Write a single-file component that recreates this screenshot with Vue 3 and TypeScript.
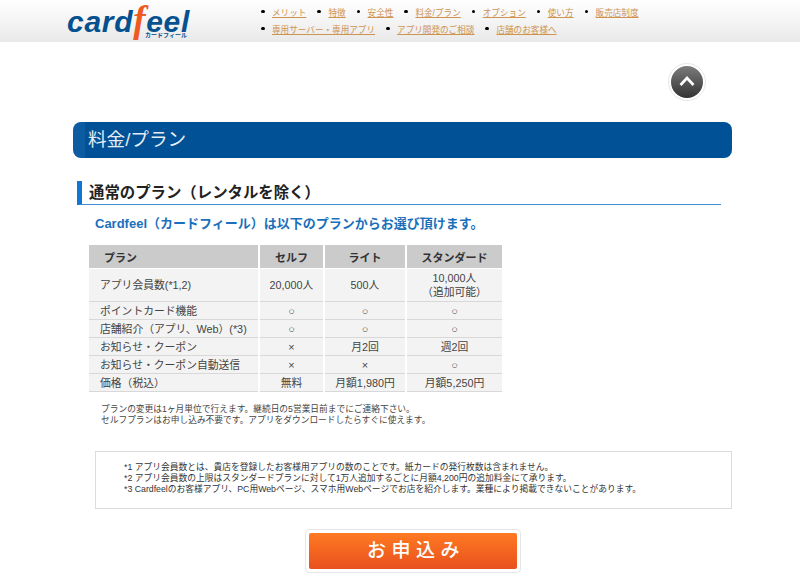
<script setup lang="ts">
const nav1: string[] = ['メリット', '特徴', '安全性', '料金/プラン', 'オプション', '使い方', '販売店制度']
const nav2: string[] = ['専用サーバー・専用アプリ', 'アプリ開発のご相談', '店舗のお客様へ']
const rows: { label: string; cells: string[]; tall?: boolean }[] = [
  { label: 'アプリ会員数(*1,2)', cells: ['20,000人', '500人', '10,000人\n（追加可能）'], tall: true },
  { label: 'ポイントカード機能', cells: ['○', '○', '○'] },
  { label: '店舗紹介（アプリ、Web）(*3)', cells: ['○', '○', '○'] },
  { label: 'お知らせ・クーポン', cells: ['×', '月2回', '週2回'] },
  { label: 'お知らせ・クーポン自動送信', cells: ['×', '×', '○'] },
  { label: '価格（税込）', cells: ['無料', '月額1,980円', '月額5,250円'] },
]
</script>

<template>
  <div class="page">
    <header class="header">
      <div class="logo">
        <span class="logo-word">card<span class="logo-f">f</span>eel</span>
        <span class="logo-kana">カードフィール</span>
      </div>
      <nav class="nav">
        <ul class="nav-line">
          <li v-for="n in nav1" :key="n"><a href="#">{{ n }}</a></li>
        </ul>
        <ul class="nav-line">
          <li v-for="n in nav2" :key="n"><a href="#">{{ n }}</a></li>
        </ul>
      </nav>
    </header>

    <div class="up-row">
      <div class="up">
        <svg width="16" height="10" viewBox="0 0 16 10"><path d="M1.5 9 L8 2 L14.5 9" fill="none" stroke="#fff" stroke-width="2.6" /></svg>
      </div>
    </div>

    <h1 class="title"><span>料金/プラン</span></h1>

    <h2 class="section">通常のプラン（レンタルを除く）</h2>
    <p class="lead">Cardfeel（カードフィール）は以下のプランからお選び頂けます。</p>

    <table class="plans">
      <thead>
        <tr>
          <th class="c0">プラン</th>
          <th class="c1">セルフ</th>
          <th class="c2">ライト</th>
          <th class="c3">スタンダード</th>
        </tr>
      </thead>
      <tbody>
        <tr v-for="r in rows" :key="r.label" :class="{ tall: r.tall }">
          <td class="label">{{ r.label }}</td>
          <td v-for="(c, i) in r.cells" :key="i">{{ c }}</td>
        </tr>
      </tbody>
    </table>

    <p class="notes">プランの変更は1ヶ月単位で行えます。継続日の5営業日前までにご連絡下さい。<br />セルフプランはお申し込み不要です。アプリをダウンロードしたらすぐに使えます。</p>

    <div class="box">
      <p>*1 アプリ会員数とは、貴店を登録したお客様用アプリの数のことです。紙カードの発行枚数は含まれません。</p>
      <p>*2 アプリ会員数の上限はスタンダードプランに対して1万人追加するごとに月額4,200円の追加料金にて承ります。</p>
      <p>*3 Cardfeelのお客様アプリ、PC用Webページ、スマホ用Webページでお店を紹介します。業種により掲載できないことがあります。</p>
    </div>

    <div class="cta-row">
      <div class="cta-frame"><a class="cta" href="#">お申込み</a></div>
    </div>
  </div>
</template>

<style scoped>
.page {
  width: 800px;
  height: 581px;
  overflow: hidden;
  background: #fff;
  font-family: "Liberation Sans", "Noto Sans CJK JP", sans-serif;
  color: #333;
}
.header {
  height: 42px;
  display: flex;
  background: linear-gradient(#ffffff, #e9e9e9);
}
.logo {
  position: relative;
  width: 261px;
  padding-left: 67px;
  box-sizing: border-box;
  flex: none;
}
.logo-word {
  display: block;
  margin-top: 5px;
  font-size: 30px;
  line-height: 30px;
  font-weight: 700;
  font-style: italic;
  color: #05508f;
  white-space: nowrap;
  letter-spacing: 0.7px;
}
.logo-f {
  font-family: "Liberation Serif", serif;
  color: #ee5a22;
  font-size: 37px;
  line-height: 30px;
}
.logo-kana {
  position: absolute;
  left: 145px;
  top: 31px;
  font-size: 6px;
  line-height: 8px;
  font-weight: 700;
  color: #05508f;
  white-space: nowrap;
}
.nav {
  padding-top: 3px;
}
.nav-line {
  display: flex;
  margin: 0;
  padding: 0;
  list-style: none;
  height: 17px;
  align-items: center;
  font-size: 8.6px;
}
.nav-line li {
  position: relative;
  padding-left: 11px;
  margin-right: 11px;
}
.nav-line li::before {
  content: "";
  position: absolute;
  left: 0;
  top: 50%;
  width: 3.5px;
  height: 3.5px;
  margin-top: -2px;
  border-radius: 50%;
  background: #000;
}
.nav-line a {
  color: #cf9350;
  text-decoration: underline;
}
.up-row {
  height: 80px;
  display: flex;
  align-items: center;
  padding-left: 669px;
}
.up {
  width: 32px;
  height: 32px;
  border: 2px solid #fff;
  outline: 1px solid #e6e6e6;
  border-radius: 50%;
  background: linear-gradient(#7c7c7c, #333);
  display: flex;
  align-items: center;
  justify-content: center;
}
.up svg {
  margin-top: -3px;
}
.title {
  margin: 0 68px 0 73px;
  height: 36px;
  border-radius: 8px;
  background: linear-gradient(90deg, #0d5ba1 12px, #005196 12px);
  color: #e6edf4;
  font-size: 18.6px;
  font-weight: 400;
  line-height: 35px;
  padding-left: 15px;
}
.section {
  margin: 23px 79px 0 77px;
  height: 23px;
  border-left: 5px solid #0f76d3;
  border-bottom: 1px solid #3f8ed6;
  padding-left: 7px;
  font-size: 15.4px;
  line-height: 23px;
  font-weight: 700;
  color: #222;
}
.lead {
  margin: 10px 0 0 95px;
  font-size: 13px;
  line-height: 18px;
  font-weight: 700;
  color: #1b70bb;
}
.plans {
  margin: 12px 0 0 87px;
  border-collapse: separate;
  border-spacing: 2px 0;
  table-layout: fixed;
  width: 417px;
  font-size: 10.8px;
  color: #444;
}
.plans th {
  height: 23px;
  padding: 0;
  background: #cbcbcb;
  font-size: 11px;
  font-weight: 700;
  color: #333;
  border-bottom: 1px solid #fff;
}
.c0 { width: 169px; text-align: left; text-indent: 15px; }
.c1 { width: 63px; }
.c2 { width: 80px; }
.c3 { width: 95px; }
.plans td {
  height: 17px;
  padding: 0;
  text-align: center;
  background: #f3f3f3;
  border-bottom: 1px solid #d8d8d8;
  white-space: pre-line;
  line-height: 14px;
}
.plans tr.tall td {
  height: 32px;
}
.plans td.label {
  text-align: left;
  padding-left: 11px;
}
.notes {
  margin: 12px 0 0 101px;
  font-size: 8.73px;
  line-height: 11px;
  color: #444;
}
.box {
  margin: 25px 68px 0 95px;
  height: 58px;
  box-sizing: border-box;
  border: 1px solid #dcdcdc;
  padding: 10px 0 0 28px;
  font-size: 8.75px;
  line-height: 11px;
  color: #333;
}
.box p {
  margin: 0;
}
.cta-row {
  margin-top: 20px;
  padding-left: 305px;
}
.cta-frame {
  width: 208px;
  height: 36px;
  padding: 3px;
  border: 1px solid #e6e6e6;
  border-radius: 4px;
}
.cta {
  display: block;
  height: 36px;
  border-radius: 2px;
  background: linear-gradient(#ff7a22, #e8501e);
  color: #fff;
  font-size: 19px;
  font-weight: 500;
  line-height: 36px;
  letter-spacing: 5.5px;
  padding-left: 6px;
  box-sizing: border-box;
  text-align: center;
  text-decoration: none;
}
</style>

<style>
html, body { margin: 0; overflow: hidden; }
</style>
